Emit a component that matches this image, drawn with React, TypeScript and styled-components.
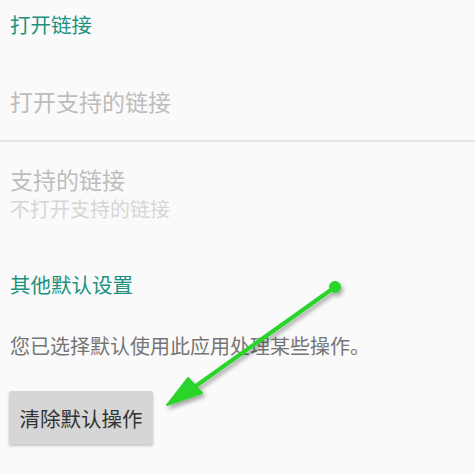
import React from "react";
import styled, { createGlobalStyle } from "styled-components";

const GlobalStyle = createGlobalStyle`
  html, body {
    margin: 0;
    padding: 0;
    background: #fafafa;
  }
  body {
    font-family: "Noto Sans CJK SC", "Noto Sans", sans-serif;
  }
`;

const Page = styled.div`
  position: relative;
  width: 475px;
  height: 474px;
  overflow: hidden;
  background: #fafafa;
`;

const SectionTitle = styled.div<{ $top: number }>`
  padding: ${(p) => p.$top}px 10px 0;
  font-size: 20.5px;
  line-height: 26px;
  color: #21917f;
`;

const PrefRow = styled.div<{ $top: number; $bottom: number }>`
  padding: ${(p) => p.$top}px 10px ${(p) => p.$bottom}px;
  display: flex;
  flex-direction: column;
`;

const PrefTitle = styled.div`
  font-size: 23px;
  line-height: 28px;
  color: #bdbdbd;
`;

const PrefSummary = styled.div`
  margin-top: 4px;
  font-size: 20px;
  line-height: 24px;
  color: #d6d6d6;
`;

const Divider = styled.div`
  height: 2px;
  background: #e3e3e3;
`;

const BodyText = styled.p`
  margin: 0;
  padding: 36px 10px 0;
  font-size: 20px;
  line-height: 26px;
  color: #757575;
`;

const ActionButton = styled.button`
  margin: 32px 0 0 9px;
  width: 144px;
  height: 53px;
  border: none;
  border-radius: 2px;
  background: #d6d6d6;
  box-shadow: 0 2px 3px rgba(0, 0, 0, 0.22);
  font-family: inherit;
  font-size: 20.5px;
  color: #333333;
  padding: 0;
`;

const Arrow = styled.svg`
  position: absolute;
  left: 0;
  top: 0;
  pointer-events: none;
`;

const App = () => {
  return (
    <Page>
      <GlobalStyle />
      <SectionTitle $top={11}>打开链接</SectionTitle>
      <PrefRow $top={50} $bottom={25}>
        <PrefTitle>打开支持的链接</PrefTitle>
      </PrefRow>
      <Divider />
      <PrefRow $top={23} $bottom={0}>
        <PrefTitle>支持的链接</PrefTitle>
        <PrefSummary>不打开支持的链接</PrefSummary>
      </PrefRow>
      <SectionTitle $top={50}>其他默认设置</SectionTitle>
      <BodyText>您已选择默认使用此应用处理某些操作。</BodyText>
      <ActionButton>清除默认操作</ActionButton>
      <Arrow width="475" height="474" viewBox="0 0 475 474">
        <defs>
          <filter id="sh" x="-20%" y="-20%" width="140%" height="140%">
            <feDropShadow dx="2" dy="3" stdDeviation="2" floodColor="#000" floodOpacity="0.35" />
          </filter>
        </defs>
        <g filter="url(#sh)" fill="#2bd42b" stroke="#2bd42b">
          <line x1="335" y1="287" x2="193" y2="388" strokeWidth="4" strokeLinecap="round" />
          <circle cx="335" cy="287" r="6" stroke="none" />
          <polygon points="167,405 188,378 202,393" strokeWidth="2" strokeLinejoin="round" />
        </g>
      </Arrow>
    </Page>
  );
};

export default App;
